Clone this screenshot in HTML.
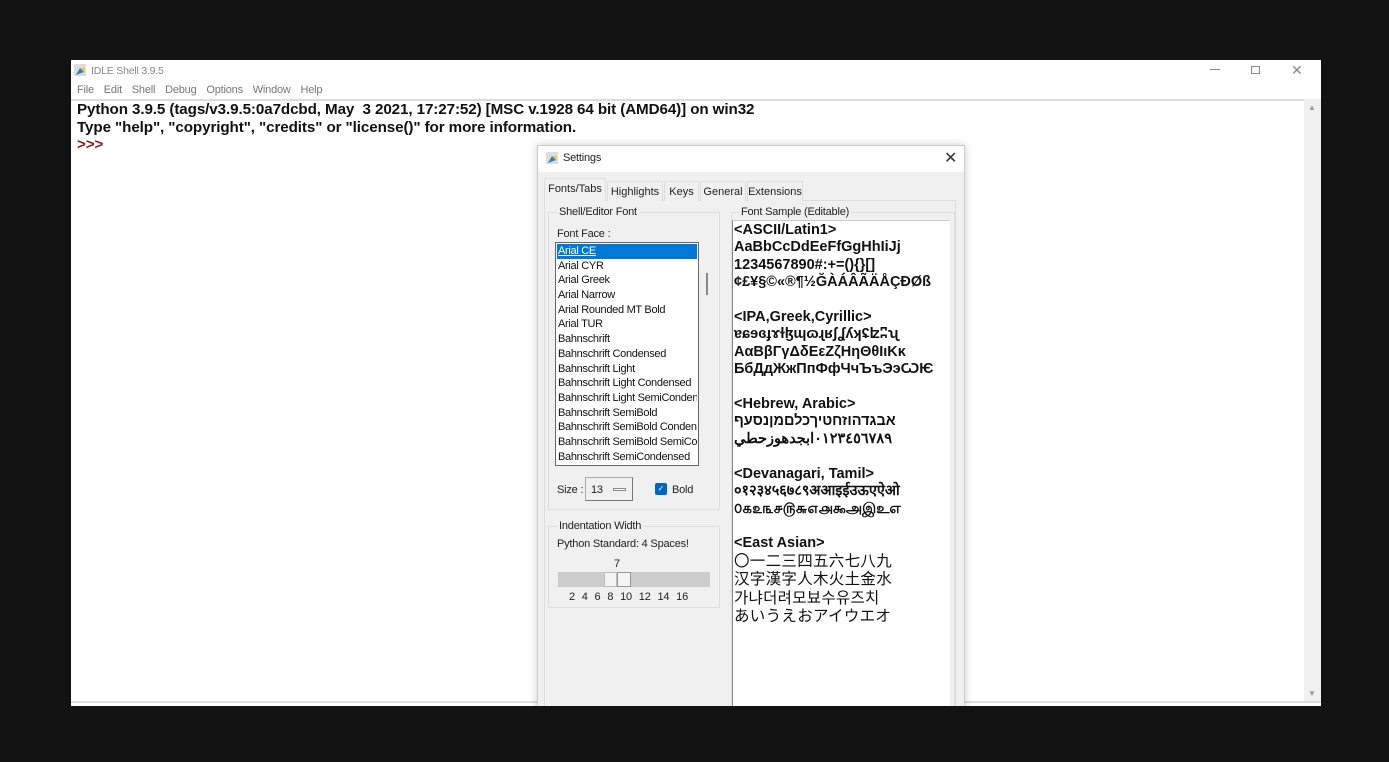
<!DOCTYPE html>
<html><head><meta charset="utf-8"><style>
*{margin:0;padding:0;box-sizing:border-box}
body{width:1389px;height:762px;background:#121212;position:relative;overflow:hidden;font-family:"Liberation Sans",sans-serif}
.a{position:absolute}
.s{font-size:11px;color:#222;letter-spacing:-0.2px}
.mono{font-family:"Liberation Sans","Noto Sans CJK SC",sans-serif;font-weight:bold;font-size:14.5px;color:#111;line-height:17.4px;white-space:nowrap}
.list div{height:14.7px;line-height:14.7px;font-size:11px;padding-left:1px;color:#111;white-space:nowrap;overflow:hidden;letter-spacing:-0.3px}
.tab{position:absolute;top:181px;height:20px;font-size:11px;line-height:20px;color:#222;text-align:center;background:#f0f0f0;border:1px solid #ddd;border-bottom:none}
#clip{position:absolute;left:0;top:0;width:1389px;height:706px;overflow:hidden}
</style></head><body>
<div id="clip">
<div class="a" style="left:71px;top:60px;width:1250px;height:646px;background:#fff"></div>
<svg class="a" style="left:73px;top:63px" width="14" height="14"><rect x="1" y="1" width="12" height="12" fill="#ddd"/><path d="M3 12 L7 5 L11 9 Z" fill="#3a78c0"/><path d="M7 5 L11 9 L12 5Z" fill="#e8c43a"/></svg>
<div class="a s" style="left:91px;top:65px;color:#888;font-size:10.5px">IDLE Shell 3.9.5</div>
<div class="a" style="left:1210px;top:69px;width:10px;height:1px;background:#888"></div>
<div class="a" style="left:1251px;top:66px;width:9px;height:8px;border:1px solid #888"></div>
<div class="a" style="left:1291px;top:62px;color:#888;font-size:14px">✕</div>
<div class="a s" style="left:77px;top:84px;color:#777;font-size:11px;word-spacing:7px">File Edit Shell Debug Options Window Help</div>
<div class="a" style="left:71px;top:99px;width:1233px;height:2px;background:#ddd"></div>
<div class="a" style="left:1304px;top:99px;width:17px;height:604px;background:#f0f0f0"></div>
<div class="a" style="left:1308px;top:103px;font-size:8px;color:#999">▲</div>
<div class="a" style="left:1308px;top:689px;font-size:8px;color:#999">▼</div>
<div class="a" style="left:71px;top:701px;width:1250px;height:2px;background:#ddd"></div>
<div class="a" style="left:77px;top:101px;font-weight:bold;font-size:15.2px;line-height:17.5px;color:#111;white-space:nowrap;letter-spacing:-0.1px">Python 3.9.5 (tags/v3.9.5:0a7dcbd, May&nbsp; 3 2021, 17:27:52) [MSC v.1928 64 bit (AMD64)] on win32<br>Type "help", "copyright", "credits" or "license()" for more information.<br><span style="color:#8b1a1a">&gt;&gt;&gt;</span></div>
<div class="a" style="left:537px;top:145px;width:428px;height:580px;background:#f0f0f0;border:1px solid #ccc;box-shadow:0 0 8px rgba(0,0,0,.2)"></div>
<div class="a" style="left:538px;top:146px;width:426px;height:26px;background:#fff"></div>
<svg class="a" style="left:545px;top:151px" width="14" height="14"><rect x="1" y="1" width="12" height="12" fill="#ddd"/><path d="M3 12 L7 5 L11 9 Z" fill="#3a78c0"/><path d="M7 5 L11 9 L12 5Z" fill="#e8c43a"/></svg>
<div class="a s" style="left:563px;top:152px">Settings</div>
<div class="a" style="left:944px;top:148px;font-size:16px;color:#333">✕</div>
<div class="a" style="left:544px;top:200px;width:412px;height:530px;border:1px solid #ddd"></div>
<div class="tab" style="left:544px;top:178px;width:62px;height:23px;background:#f0f0f0;border-color:#ddd">Fonts/Tabs</div>
<div class="tab" style="left:607px;width:56px">Highlights</div>
<div class="tab" style="left:664px;width:35px">Keys</div>
<div class="tab" style="left:700px;width:46px">General</div>
<div class="tab" style="left:747px;width:56px">Extensions</div>
<div class="a" style="left:548px;top:212px;width:172px;height:298px;border:1px solid #ddd"></div>
<div class="a s" style="left:557px;top:206px;background:#f0f0f0;padding:0 2px">Shell/Editor Font</div>
<div class="a s" style="left:557px;top:228px">Font Face :</div>
<div class="a list" style="left:555px;top:242px;width:144px;height:224px;border:1px solid #666;background:#fff;padding:1px">
<div style="background:#0078d7;color:#fff;text-decoration:underline">Arial CE</div><div>Arial CYR</div><div>Arial Greek</div><div>Arial Narrow</div><div>Arial Rounded MT Bold</div><div>Arial TUR</div><div>Bahnschrift</div><div>Bahnschrift Condensed</div><div>Bahnschrift Light</div><div>Bahnschrift Light Condensed</div><div>Bahnschrift Light SemiCondensed</div><div>Bahnschrift SemiBold</div><div>Bahnschrift SemiBold Condensed</div><div>Bahnschrift SemiBold SemiCondensed</div><div>Bahnschrift SemiCondensed</div></div>
<div class="a" style="left:706px;top:273px;width:2px;height:22px;background:#888"></div>
<div class="a s" style="left:557px;top:484px">Size :</div>
<div class="a" style="left:585px;top:477px;width:48px;height:24px;border:1px solid #aaa;border-right-color:#777;border-bottom-color:#777;background:#f0f0f0"></div>
<div class="a s" style="left:591px;top:484px">13</div>
<div class="a" style="left:613px;top:488px;width:13px;height:3px;border:1px solid #888;background:#fff"></div>
<div class="a" style="left:655px;top:483px;width:12px;height:12px;background:#0067c0;border-radius:2px;color:#fff;font-size:8px;text-align:center;line-height:12px">✓</div>
<div class="a s" style="left:672px;top:484px">Bold</div>
<div class="a" style="left:548px;top:526px;width:172px;height:82px;border:1px solid #ddd"></div>
<div class="a s" style="left:557px;top:520px;background:#f0f0f0;padding:0 2px">Indentation Width</div>
<div class="a s" style="left:557px;top:538px">Python Standard: 4 Spaces!</div>
<div class="a s" style="left:614px;top:558px">7</div>
<div class="a" style="left:558px;top:572px;width:152px;height:15px;background:#ccc"></div>
<div class="a" style="left:604px;top:572px;width:13px;height:15px;background:#f4f4f4;border:1px solid #bbb"></div>
<div class="a" style="left:617px;top:572px;width:14px;height:15px;background:#f4f4f4;border:1px solid #999"></div>
<div class="a s" style="left:569px;top:591px;word-spacing:4px">2 4 6 8 10 12 14 16</div>
<div class="a" style="left:731px;top:212px;width:224px;height:520px;border:1px solid #ddd"></div>
<div class="a s" style="left:739px;top:206px;background:#f0f0f0;padding:0 2px">Font Sample (Editable)</div>
<div class="a" style="left:732px;top:220px;width:218px;height:500px;background:#fff;border-left:1px solid #888;border-top:1px solid #ccc"></div>
<div class="a mono" style="left:734px;top:222px;width:214px;overflow:hidden">&lt;ASCII/Latin1&gt;<br>AaBbCcDdEeFfGgHhIiJj<br>1234567890#:+=(){}[]<br>¢£¥§©«®¶½ĞÀÁÂÃÄÅÇÐØß<br><br>&lt;IPA,Greek,Cyrillic&gt;<br>ɐɕɘɞɟɤɫɮɰɷɻʁʃʆʎʞʢʫʭʯ<br>ΑαΒβΓγΔδΕεΖζΗηΘθΙιΚκ<br>БбДдЖжПпФфЧчЪъЭэѠѤ<br><br>&lt;Hebrew, Arabic&gt;<br>אבגדהוזחטיךכלםמןנסעף<br>٠١٢٣٤٥٦٧٨٩ابجدهوزحطي<br><br>&lt;Devanagari, Tamil&gt;<br>०१२३४५६७८९अआइईउऊएऐओ<br>௦௧௨௩௪௫௬௭௮௯அஇஉஎ<br><br>&lt;East Asian&gt;<br><span style="font-weight:normal;font-size:15.5px;letter-spacing:0.3px">〇一二三四五六七八九<br>汉字漢字人木火土金水<br>가냐더려모뵤수유즈치<br>あいうえおアイウエオ</span></div>
</div>
</body></html>
